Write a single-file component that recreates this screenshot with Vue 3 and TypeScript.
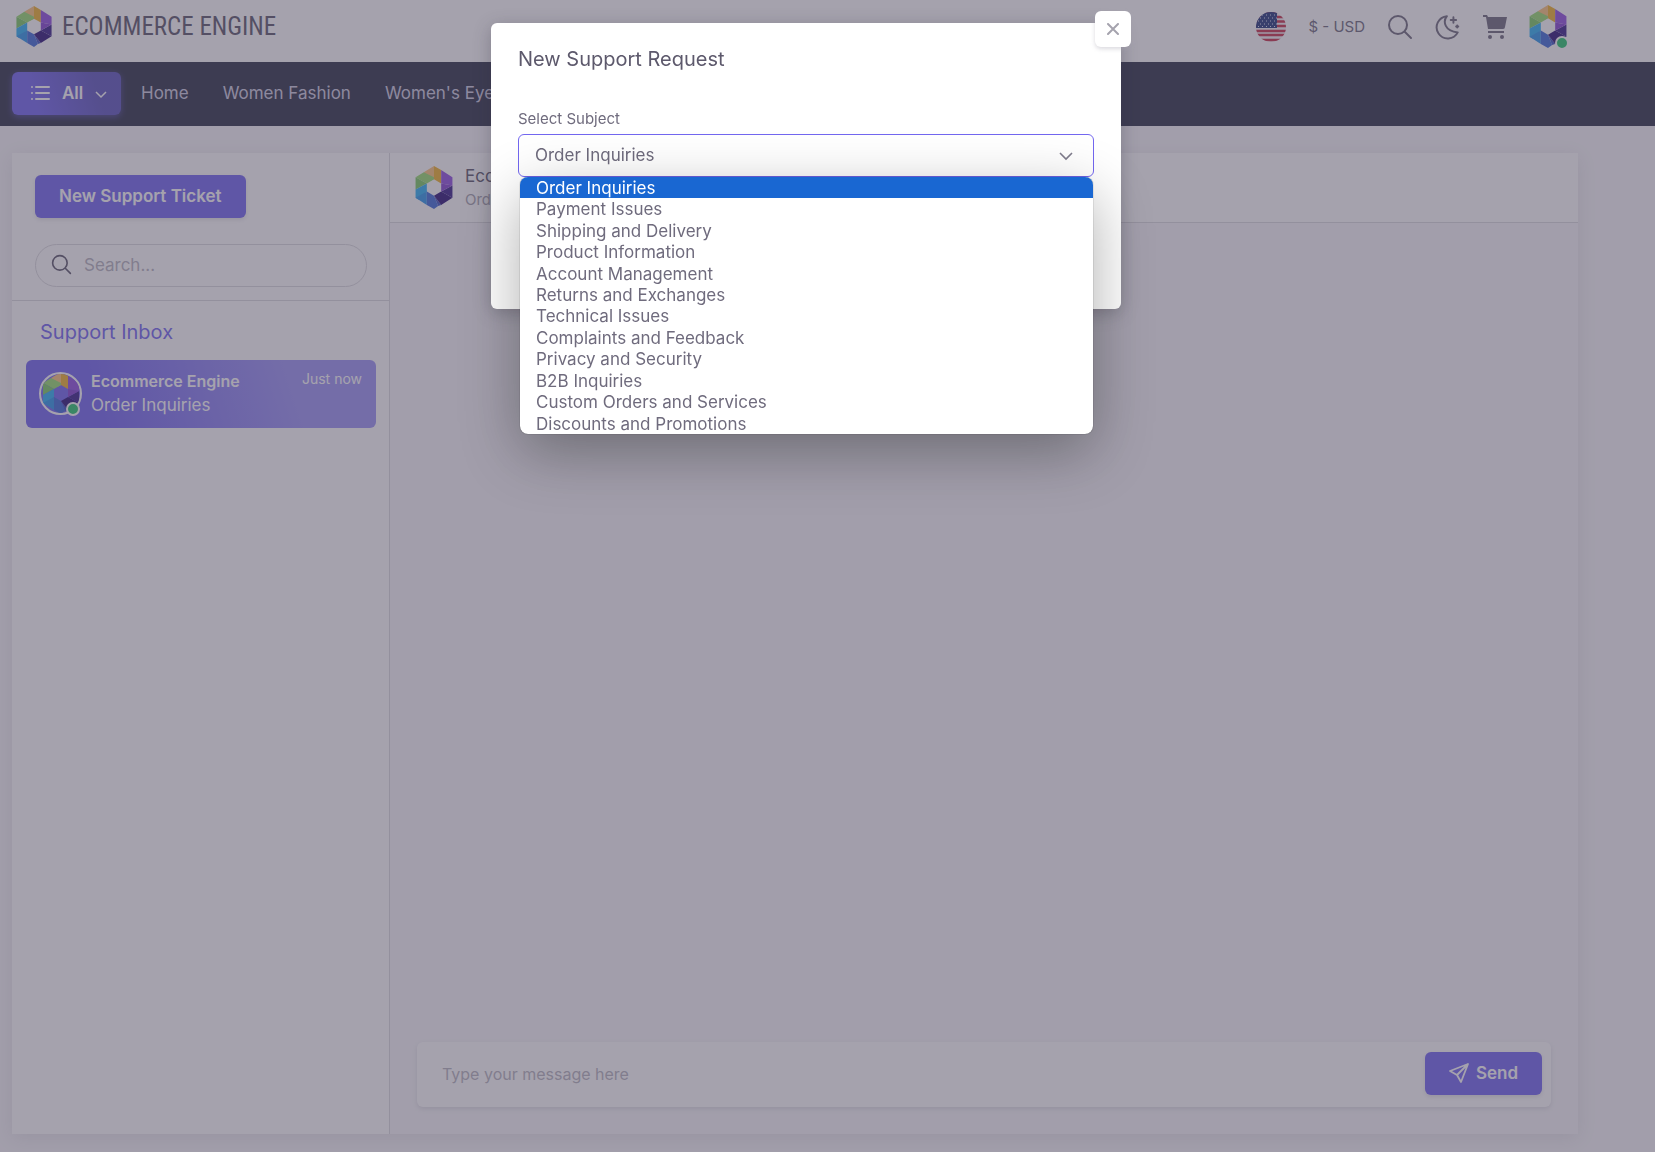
<script setup lang="ts">
import { ref } from 'vue'
import type { FunctionalComponent } from 'vue'
import { h } from 'vue'

const facets: [string, string][] = [
  ['#fcc47c', '8,6 18,0 18,13 14,15'],
  ['#f0b22c', '18,0 25,4 25,17 18,13'],
  ['#98dc70', '0,11 8,6 18,11 18,13 11,17'],
  ['#7ccb64', '0,11 11,17 0,23'],
  ['#2fb0f4', '0,23 11,17 11,25 3,33 0,31'],
  ['#2f96ea', '0,31 11,25 11,38'],
  ['#3f6cd8', '11,25 18,29 22,39 18,42 11,38'],
  ['#3c55c4', '18,29 25,38 22,39'],
  ['#2c1578', '18,29 25,25 36,31 25,38'],
  ['#38208a', '25,25 36,19 36,31'],
  ['#9050e0', '25,4 36,11 36,19 25,17'],
  ['#8444d2', '25,17 36,19 25,25'],
]

const HexLogo: FunctionalComponent = () =>
  h(
    'svg',
    { viewBox: '0 0 36 42', 'aria-hidden': 'true' },
    facets.map(([fill, points]) => h('polygon', { fill, points })),
  )

const categories = ['Home', 'Women Fashion', "Women's Eyewear"]
const subjects = [
  'Order Inquiries',
  'Payment Issues',
  'Shipping and Delivery',
  'Product Information',
  'Account Management',
  'Returns and Exchanges',
  'Technical Issues',
  'Complaints and Feedback',
  'Privacy and Security',
  'B2B Inquiries',
  'Custom Orders and Services',
  'Discounts and Promotions',
]
const subject = ref(subjects[0])
const search = ref('')
const message = ref('')
</script>

<template>
  <div class="page">
    <header class="topbar">
      <a class="brand" href="#">
        <HexLogo class="brand-mark" />
        <span>ECOMMERCE ENGINE</span>
      </a>
      <div class="tools">
        <button class="tool" type="button" aria-label="Language">
          <svg width="30" height="30" viewBox="0 0 30 30">
            <defs>
              <clipPath id="flag"><circle cx="15" cy="15" r="15" /></clipPath>
            </defs>
            <g clip-path="url(#flag)">
              <rect width="30" height="30" fill="#f4f0f4" />
              <path d="M0 1h30M0 6h30M0 10.500h30M0 15h30M0 20h30M0 24h30M0 29h30" transform="translate(0 -1)" stroke="#c8324a" stroke-width="2.300" />
              <rect width="21" height="16" fill="#24387c" />
              <path d="M2 3h19M4 6h17M2 9h19M4 12h17M2 14.500h19" stroke="#dfe3f5" stroke-width="1" stroke-dasharray="1 3" />
            </g>
          </svg>
        </button>
        <button class="tool currency" type="button">$ - USD</button>
        <button class="tool" type="button" aria-label="Search">
          <svg width="26" height="26" viewBox="0 0 26 26" fill="none" stroke="#6f6b7d" stroke-width="2" stroke-linecap="round">
            <circle cx="11" cy="11" r="9" /><path d="M18 18l6 6" />
          </svg>
        </button>
        <button class="tool" type="button" aria-label="Dark mode">
          <svg width="26" height="26" viewBox="0 0 24 24" fill="none" stroke="#6f6b7d" stroke-width="1.800" stroke-linecap="round" stroke-linejoin="round">
            <path d="M11 2C7 7 9 16 21 17a10.300 10.300 0 1 1-10-15z" />
            <path d="M17 3v5M14.500 5.500h5" /><path d="M20.500 10.500v2M19.500 11.500h2" />
          </svg>
        </button>
        <button class="tool" type="button" aria-label="Cart">
          <svg width="24" height="24" viewBox="0 0 24 24" fill="#6f6b7d">
            <path d="M0 0h4l1 2h19l-2 10a2 2 0 0 1-2 2H5L3 2H0zM5 16h16v2H5z" />
            <circle cx="7" cy="22" r="2" /><circle cx="19" cy="22" r="2" />
          </svg>
        </button>
        <button class="tool user" type="button" aria-label="Account">
          <HexLogo class="user-mark" /><span class="dot" />
        </button>
      </div>
    </header>

    <nav class="navbar">
      <button class="all" type="button">
        <svg width="20" height="18" viewBox="0 0 20 18" fill="none" stroke="currentColor" stroke-width="2" stroke-linecap="round">
          <path d="M6 3h13M6 9h13M6 15h13M2 3h0M2 9h0M2 15h0" />
        </svg>
        <span>All</span>
        <svg class="caret" width="12" height="8" viewBox="0 0 12 8" fill="none" stroke="currentColor" stroke-width="1.500">
          <path d="M1 1l5 5 5-5" />
        </svg>
      </button>
      <a v-for="c in categories" :key="c" href="#">{{ c }}</a>
    </nav>

    <main class="chat">
      <aside class="sidebar">
        <div class="sidebar-top">
          <button class="btn" type="button">New Support Ticket</button>
          <label class="search">
            <svg width="21" height="21" viewBox="0 0 26 26" fill="none" stroke="#5d596c" stroke-width="2" stroke-linecap="round">
              <circle cx="11" cy="11" r="9" /><path d="M18 18l6 6" />
            </svg>
            <input v-model="search" type="search" placeholder="Search..." aria-label="Search" />
          </label>
        </div>
        <h2>Support Inbox</h2>
        <a class="thread" href="#">
          <span class="thread-avatar"><span class="ring"><HexLogo class="ring-mark" /></span><span class="dot" /></span>
          <span class="thread-text">
            <strong>Ecommerce Engine</strong>
            <span>Order Inquiries</span>
          </span>
          <small>Just now</small>
        </a>
      </aside>
      <section class="conversation">
        <header class="chat-head">
          <HexLogo class="head-mark" />
          <div>
            <h3>Ecommerce Engine</h3>
            <p>Order Inquiries</p>
          </div>
        </header>
        <div class="history" />
        <form class="composer" @submit.prevent>
          <input v-model="message" type="text" placeholder="Type your message here" aria-label="Message" />
          <button class="btn send" type="submit">
            <svg width="20" height="20" viewBox="0 0 20 20" fill="none" stroke="currentColor" stroke-width="1.800" stroke-linejoin="round">
              <path d="M19 1L1 8l7 4 4 7zM19 1L8 12" />
            </svg>
            Send
          </button>
        </form>
      </section>
    </main>
  </div>

  <div class="backdrop">
    <div class="modal" role="dialog" aria-labelledby="modal-title">
      <button class="close" type="button" aria-label="Close">
        <svg width="12" height="12" viewBox="0 0 12 12" fill="none" stroke="#a5a3ae" stroke-width="2" stroke-linecap="round">
          <path d="M1 1l10 10M11 1L1 11" />
        </svg>
      </button>
      <h1 id="modal-title">New Support Request</h1>
      <label class="field-label" for="subject">Select Subject</label>
      <div class="field">
        <select id="subject" v-model="subject">
          <option v-for="s in subjects" :key="s">{{ s }}</option>
        </select>
        <svg class="select-caret" width="14" height="9" viewBox="0 0 14 9" fill="none" stroke="#7f7c8c" stroke-width="1.600">
          <path d="M1 1l6 6 6-6" />
        </svg>
        <ul class="options" role="listbox" aria-label="Select Subject">
          <li v-for="s in subjects" :key="s" role="option" :aria-selected="s === subject" @click="subject = s">{{ s }}</li>
        </ul>
      </div>
    </div>
  </div>
</template>

<style>
body {
  background: #f8f7fa;
}
</style>

<style scoped>
* {
  box-sizing: border-box;
}
.page,
.backdrop {
  font: 17px/24px Inter, 'Liberation Sans', sans-serif;
  color: #6f6b7d;
}
button,
input,
select {
  font: inherit;
  color: inherit;
  border: 0;
  background: none;
  padding: 0;
}
a {
  color: inherit;
  text-decoration: none;
}
h1,
h2,
h3,
p,
ul {
  margin: 0;
  padding: 0;
  font-weight: 400;
}
.page {
  min-height: 100vh;
  display: flex;
  flex-direction: column;
}
.topbar {
  height: 62px;
  padding: 0 88px 9px 16px;
  display: flex;
  align-items: center;
  justify-content: space-between;
  background: #fff;
}
.brand {
  display: flex;
  align-items: center;
  gap: 10px;
  font: 25px/30px 'Liberation Sans Narrow', 'Roboto Condensed', Roboto, sans-serif;
  color: #5d596c;
}
.brand-mark {
  width: 36px;
  height: 41px;
}
.tools {
  display: flex;
  align-items: center;
  gap: 22px;
}
.tool {
  display: flex;
}
.currency {
  font-size: 15px;
}
.user,
.thread-avatar {
  position: relative;
}
.user-mark,
.head-mark {
  width: 38px;
  height: 43px;
}
.dot {
  position: absolute;
  right: -2px;
  bottom: -2px;
  width: 14px;
  height: 14px;
  border: 2px solid #fff;
  border-radius: 50%;
  background: #28c76f;
}
.navbar {
  height: 64px;
  padding: 0 12px 2px;
  display: flex;
  align-items: center;
  gap: 34px;
  background: #2f3349;
  color: #cfcde0;
}
.all {
  height: 43px;
  width: 109px;
  margin-right: -14px;
  padding: 0 13px 0 18px;
  display: flex;
  align-items: center;
  gap: 12px;
  border-radius: 6px;
  background: linear-gradient(72deg, #7367f0 22%, rgba(115, 103, 240, 0.7) 76%);
  box-shadow: 0 2px 6px rgba(115, 103, 240, 0.48);
  color: #fff;
  font-weight: 600;
}
.caret {
  margin-top: 4px;
}
.chat {
  flex: 1;
  margin: 27px 77px 18px 12px;
  display: flex;
  box-shadow: 0 4px 18px rgba(47, 43, 61, 0.1);
}
.sidebar {
  width: 378px;
  border-right: 1px solid #dbdade;
  background: #fff;
}
.sidebar-top {
  padding: 22px 22px 13px 23px;
  border-bottom: 1px solid #dbdade;
}
.btn {
  height: 43px;
  padding: 0 24px 2px;
  border-radius: 6px;
  background: #7367f0;
  box-shadow: 0 2px 4px rgba(165, 163, 174, 0.3);
  color: #fff;
  font-weight: 600;
}
.search {
  height: 43px;
  margin-top: 26px;
  padding: 0 15px 2px;
  display: flex;
  align-items: center;
  gap: 12px;
  border: 1px solid #dbdade;
  border-radius: 22px;
}
input {
  flex: 1;
  min-width: 0;
  outline: 0;
}
input::placeholder {
  color: #b7b5be;
  opacity: 1;
}
h2 {
  padding: 18px 28px 15px;
  font-size: 20px;
  line-height: 26px;
  color: #7367f0;
}
.thread {
  height: 68px;
  margin: 0 13px 0 14px;
  padding: 7px 14px 9px 13px;
  display: flex;
  align-items: center;
  gap: 9px;
  border-radius: 6px;
  background: linear-gradient(72deg, #7367f0 22%, #9d95f5 76%);
  color: #fff;
}
.ring {
  width: 43px;
  height: 43px;
  display: flex;
  align-items: center;
  justify-content: center;
  border: 2px solid #fff;
  border-radius: 50%;
  overflow: hidden;
}
.ring-mark {
  width: 36px;
  height: 42px;
  flex: none;
}
.thread-avatar .dot {
  right: 2px;
  bottom: -1px;
}
.thread-text {
  flex: 1;
  display: flex;
  flex-direction: column;
}
.thread-text strong {
  font-size: 16px;
  font-weight: 600;
}
.thread small {
  align-self: flex-start;
  font-size: 14px;
}
.conversation {
  flex: 1;
  display: flex;
  flex-direction: column;
}
.chat-head {
  height: 70px;
  padding: 0 25px;
  display: flex;
  align-items: center;
  gap: 12px;
  border-bottom: 1px solid #dbdade;
  background: #fff;
}
h3 {
  font-size: 17px;
  color: #5d596c;
}
p {
  font-size: 15px;
  color: #a5a3ae;
}
.history {
  flex: 1;
}
.composer {
  height: 65px;
  margin: 0 27px 27px;
  padding: 0 9px 2px 25px;
  display: flex;
  align-items: center;
  border-radius: 6px;
  background: #fff;
  box-shadow: 0 2px 4px rgba(165, 163, 174, 0.3);
}
.composer input {
  font-size: 16px;
}
.send {
  display: flex;
  align-items: center;
  gap: 7px;
}
.backdrop {
  position: fixed;
  inset: 0;
  padding: 23px 43px 0 0;
  background: rgba(75, 70, 92, 0.5);
}
.modal {
  position: relative;
  max-width: 630px;
  height: 286px;
  margin: 0 auto;
  padding: 22px 27px;
  border-radius: 6px;
  background: #fff;
  box-shadow: 0 4px 18px rgba(47, 43, 61, 0.3);
}
.close {
  position: absolute;
  top: -12px;
  right: -10px;
  width: 36px;
  height: 36px;
  display: flex;
  align-items: center;
  justify-content: center;
  border-radius: 6px;
  background: #fff;
  box-shadow: 0 2px 4px rgba(165, 163, 174, 0.4);
}
h1 {
  font-size: 20px;
  line-height: 28px;
  color: #5d596c;
}
.field-label {
  display: block;
  margin-top: 35px;
  font-size: 15px;
  line-height: 22px;
  color: #6f6b7d;
}
.field {
  position: relative;
  margin-top: 4px;
}
select {
  appearance: none;
  display: block;
  width: 100%;
  height: 43px;
  padding: 0 16px 2px;
  border: 1px solid #7367f0;
  border-radius: 6px;
  outline: 0;
}
.select-caret {
  position: absolute;
  top: 18px;
  right: 21px;
  pointer-events: none;
}
.options {
  position: absolute;
  top: 100%;
  left: 2px;
  right: 1px;
  height: 257px;
  display: grid;
  grid-auto-rows: 1fr;
  list-style: none;
  line-height: 20px;
  border-radius: 8px;
  overflow: hidden;
  background: #fff;
  box-shadow: 0 0 1px rgba(0, 0, 0, 0.7), 0 18px 60px rgba(0, 0, 0, 0.32);
}
.options li {
  padding: 1px 16px 0;
}
.options li[aria-selected='true'] {
  background: #1967d2;
  color: #fff;
}
</style>
